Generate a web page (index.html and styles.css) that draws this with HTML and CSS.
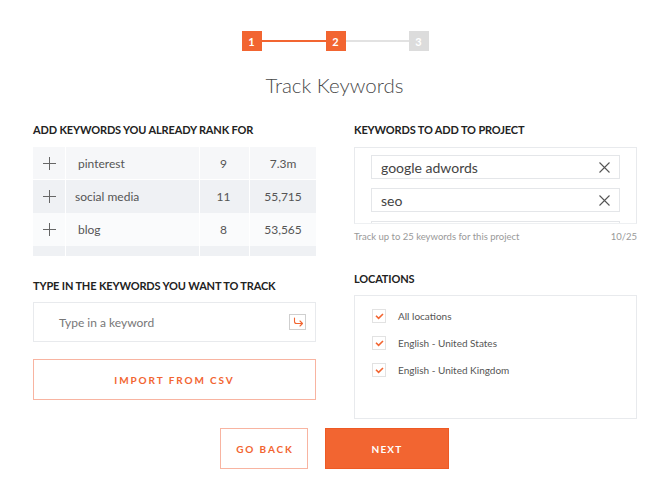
FILE: index.html
```html
<!DOCTYPE html>
<html>
<head>
<meta charset="utf-8">
<link rel="stylesheet" href="styles.css">
</head>
<body>
<div class="page">
  <div class="stepper">
    <span class="step active">1</span>
    <span class="line active"></span>
    <span class="step active">2</span>
    <span class="line"></span>
    <span class="step">3</span>
  </div>
  <h1 class="title">Track Keywords</h1>
  <div class="columns">
    <div class="col">
      <h2 class="heading">Add keywords you already rank for</h2>
      <div class="table-wrap">
        <div class="row r1">
          <div class="cell plus"><svg width="13" height="13" viewBox="0 0 13 13"><path d="M6.5 0v13M0 6.5h13" stroke="#666" stroke-width="1" fill="none"/></svg></div>
          <div class="cell kw">pinterest</div>
          <div class="cell rank">9</div>
          <div class="cell vol">7.3m</div>
        </div>
        <div class="row r2">
          <div class="cell plus"><svg width="13" height="13" viewBox="0 0 13 13"><path d="M6.5 0v13M0 6.5h13" stroke="#666" stroke-width="1" fill="none"/></svg></div>
          <div class="cell kw kw-shift">social media</div>
          <div class="cell rank">11</div>
          <div class="cell vol">55,715</div>
        </div>
        <div class="row r3">
          <div class="cell plus"><svg width="13" height="13" viewBox="0 0 13 13"><path d="M6.5 0v13M0 6.5h13" stroke="#666" stroke-width="1" fill="none"/></svg></div>
          <div class="cell kw">blog</div>
          <div class="cell rank">8</div>
          <div class="cell vol">53,565</div>
        </div>
        <div class="row r4">
          <div class="cell plus"></div>
          <div class="cell kw"></div>
          <div class="cell rank"></div>
          <div class="cell vol"></div>
        </div>
      </div>
      <h2 class="heading heading-2">Type in the keywords you want to track</h2>
      <div class="text-input">
        <span class="placeholder">Type in a keyword</span>
        <span class="enter-icon"><svg width="14" height="14" viewBox="0 0 14 14"><path d="M3.5 3v3.5q0 2 2 2h6M9 6l2.5 2.5L9 11" stroke="#f26531" stroke-width="1.1" fill="none" stroke-linecap="round" stroke-linejoin="round"/></svg></span>
      </div>
      <button class="btn btn-outline btn-wide">Import from CSV</button>
    </div>
    <div class="col">
      <h2 class="heading">Keywords to add to project</h2>
      <div class="kw-box">
        <div class="chip"><span>google adwords</span><svg width="11" height="11" viewBox="0 0 11 11"><path d="M0.5 0.5l10 10M10.5 0.5l-10 10" stroke="#555" stroke-width="1.1" fill="none"/></svg></div>
        <div class="chip"><span>seo</span><svg width="11" height="11" viewBox="0 0 11 11"><path d="M0.5 0.5l10 10M10.5 0.5l-10 10" stroke="#555" stroke-width="1.1" fill="none"/></svg></div>
        <div class="chip"></div>
      </div>
      <div class="foot">
        <span>Track up to 25 keywords for this project</span>
        <span>10/25</span>
      </div>
      <h2 class="heading heading-loc">Locations</h2>
      <div class="loc-box">
        <label class="loc"><span class="check"><svg width="9" height="7" viewBox="0 0 9 7"><path d="M1 2.8l2.6 2.6L8 1" stroke="#f26531" stroke-width="1.6" fill="none"/></svg></span>All locations</label>
        <label class="loc"><span class="check"><svg width="9" height="7" viewBox="0 0 9 7"><path d="M1 2.8l2.6 2.6L8 1" stroke="#f26531" stroke-width="1.6" fill="none"/></svg></span>English - United States</label>
        <label class="loc"><span class="check"><svg width="9" height="7" viewBox="0 0 9 7"><path d="M1 2.8l2.6 2.6L8 1" stroke="#f26531" stroke-width="1.6" fill="none"/></svg></span>English - United Kingdom</label>
      </div>
    </div>
  </div>
  <div class="actions">
    <button class="btn btn-outline btn-back">Go back</button>
    <button class="btn btn-primary btn-next">Next</button>
  </div>
</div>
</body>
</html>
```
FILE: styles.css
```css
* { box-sizing: border-box; }
html, body { margin: 0; padding: 0; background: #fff; }
body {
  font-family: "Lato", "Open Sans", sans-serif;
  color: #444;
  width: 669px;
  height: 499px;
  overflow: hidden;
}
.page { padding-top: 31px; }

.stepper {
  display: flex;
  justify-content: center;
  align-items: center;
  height: 20px;
  padding-left: 1px;
}
.step {
  width: 20px;
  height: 20px;
  background: #dcdcdc;
  color: #fff;
  font-size: 11px;
  font-weight: 700;
  display: flex;
  align-items: center;
  justify-content: center;
}
.step.active { background: #f26531; }
.line { width: 63px; height: 2px; background: #e2e2e2; }
.line.active { width: 64px; background: #f26531; }

.title {
  margin: 22px 0 0;
  text-align: center;
  font-size: 20.5px;
  line-height: 24px;
  font-weight: 300;
  color: #4a4a4a;
}

.columns {
  display: flex;
  justify-content: center;
  gap: 38px;
  margin-top: 26px;
  padding-left: 1px;
}
.col { width: 283px; display: flex; flex-direction: column; }

.heading {
  margin: 0 0 10px;
  font-size: 11px;
  line-height: 14px;
  font-weight: 700;
  text-transform: uppercase;
  color: #222;
  letter-spacing: -0.15px;
}
.heading-2 { margin-top: 23px; margin-bottom: 9px; }
.heading-loc { margin-top: 28px; margin-bottom: 9px; }

.table-wrap { height: 109px; overflow: hidden; }
.row { display: flex; height: 33px; }
.row.r1 { background: #f6f7f9; height: 32px; }
.row.r2 { background: #eff1f4; margin-top: 1px; }
.row.r3 { background: #fafbfc; }
.row.r4 { background: #eff1f4; }
.cell {
  display: flex;
  align-items: center;
  font-size: 12px;
  color: #555;
  border-right: 1px solid #fff;
}
.cell:last-child { border-right: 0; }
.plus { width: 33px; justify-content: center; padding-left: 0; }
.kw { width: 134px; padding-left: 12px; }
.kw-shift { padding-left: 9px; }
.rank { width: 50px; justify-content: center; padding-right: 2px; }
.vol { flex: 1; justify-content: center; }

.text-input {
  height: 40px;
  border: 1px solid #e8eaed;
  display: flex;
  align-items: center;
  justify-content: space-between;
  padding: 0 9px 0 25px;
}
.placeholder { font-size: 12px; color: #777; }
.enter-icon {
  width: 17px;
  height: 16px;
  border: 1px solid #cfcfcf;
  display: flex;
  align-items: center;
  justify-content: center;
}

.btn {
  font-family: "Lato", "Open Sans", sans-serif;
  font-weight: 700;
  font-size: 10px;
  text-transform: uppercase;
  cursor: pointer;
}
.btn-outline {
  background: #fff;
  border: 1px solid #f8b4a1;
  color: #f26531;
  letter-spacing: 1.9px;
}
.btn-wide { margin-top: 17px; height: 41px; width: 100%; }
.btn-primary {
  background: #f26531;
  border: 1px solid #ee5a24;
  color: #fff;
  letter-spacing: 1.2px;
}

.kw-box {
  height: 77px;
  border: 1px solid #e8eaed;
  border-bottom-color: #eef0f2;
  overflow: hidden;
  padding: 7px 16px 0;
  display: flex;
  flex-direction: column;
  gap: 9px;
}
.chip {
  flex: none;
  height: 24px;
  border: 1px solid #e4e6e9;
  display: flex;
  align-items: center;
  justify-content: space-between;
  padding: 0 9px 0 9px;
  font-size: 14px;
  color: #444;
}

.foot {
  margin-top: 6px;
  display: flex;
  justify-content: space-between;
  font-size: 9.5px;
  line-height: 14px;
  color: #999;
}

.loc-box {
  height: 124px;
  border: 1px solid #e8eaed;
  padding: 13px 0 0 17px;
  display: flex;
  flex-direction: column;
  gap: 13px;
}
.loc {
  display: flex;
  align-items: center;
  font-size: 10px;
  color: #555;
  height: 14px;
}
.check {
  width: 14px;
  height: 14px;
  border: 1px solid #e2e2e2;
  background: #fff;
  display: flex;
  align-items: center;
  justify-content: center;
  margin-right: 12px;
}

.actions {
  margin-top: 9px;
  display: flex;
  justify-content: center;
  gap: 17px;
}
.btn-back { width: 88px; height: 41px; padding: 0 0 0 2px; }
.btn-next { width: 124px; height: 41px; padding: 0; }
```
